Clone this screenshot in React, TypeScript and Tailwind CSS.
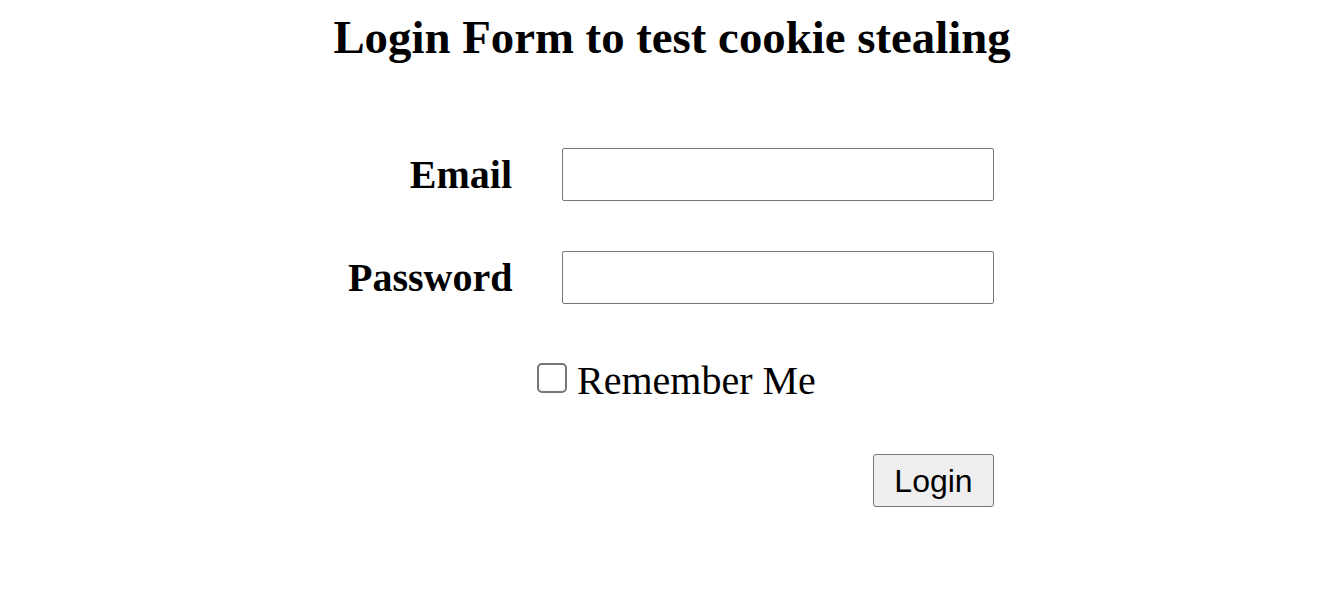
import { useState } from "react";

const serif = { fontFamily: '"Liberation Serif", "Times New Roman", serif' };

export default function App() {
  const [remember, setRemember] = useState(false);

  return (
    <div className="min-h-[589px] w-full bg-white text-black" style={serif}>
      <h1 className="pl-[10px] pt-[10px] text-center text-[46.8px] font-bold leading-[54px]">
        Login Form to test cookie stealing
      </h1>

      <form
        className="ml-[348px] mt-[84px] w-[646px]"
        onSubmit={(e) => e.preventDefault()}
      >
        <div className="grid grid-cols-[164px_432px] items-center gap-x-[50px] gap-y-[50px]">
          <label
            htmlFor="email"
            className="text-right text-[40px] font-bold leading-[46px]"
          >
            Email
          </label>
          <input
            id="email"
            type="email"
            className="h-[53px] w-[432px] rounded-[2px] border border-[#767676] bg-white px-2 text-[20px]"
          />

          <label
            htmlFor="password"
            className="text-right text-[40px] font-bold leading-[46px]"
          >
            Password
          </label>
          <input
            id="password"
            type="password"
            className="h-[53px] w-[432px] rounded-[2px] border border-[#767676] bg-white px-2 text-[20px]"
          />
        </div>

        <div className="mt-[54px] flex items-center pl-[189px] text-[40px] leading-[46px]">
          <input
            id="remember"
            type="checkbox"
            checked={remember}
            onChange={(e) => setRemember(e.target.checked)}
            className="-mt-[6px] h-[30px] w-[30px] appearance-none rounded-[5px] border-[2.5px] border-[#767676] bg-white checked:bg-[#0075ff] checked:border-[#0075ff]"
          />
          <label htmlFor="remember" className="ml-[10px]">
            Remember Me
          </label>
        </div>

        <div className="mt-[50px] flex justify-end">
          <button
            type="submit"
            className="h-[53px] w-[121px] rounded-[3px] border border-[#767676] bg-[#efefef] text-[32px]"
            style={{ fontFamily: '"Liberation Sans", Arial, sans-serif' }}
          >
            Login
          </button>
        </div>
      </form>
    </div>
  );
}
